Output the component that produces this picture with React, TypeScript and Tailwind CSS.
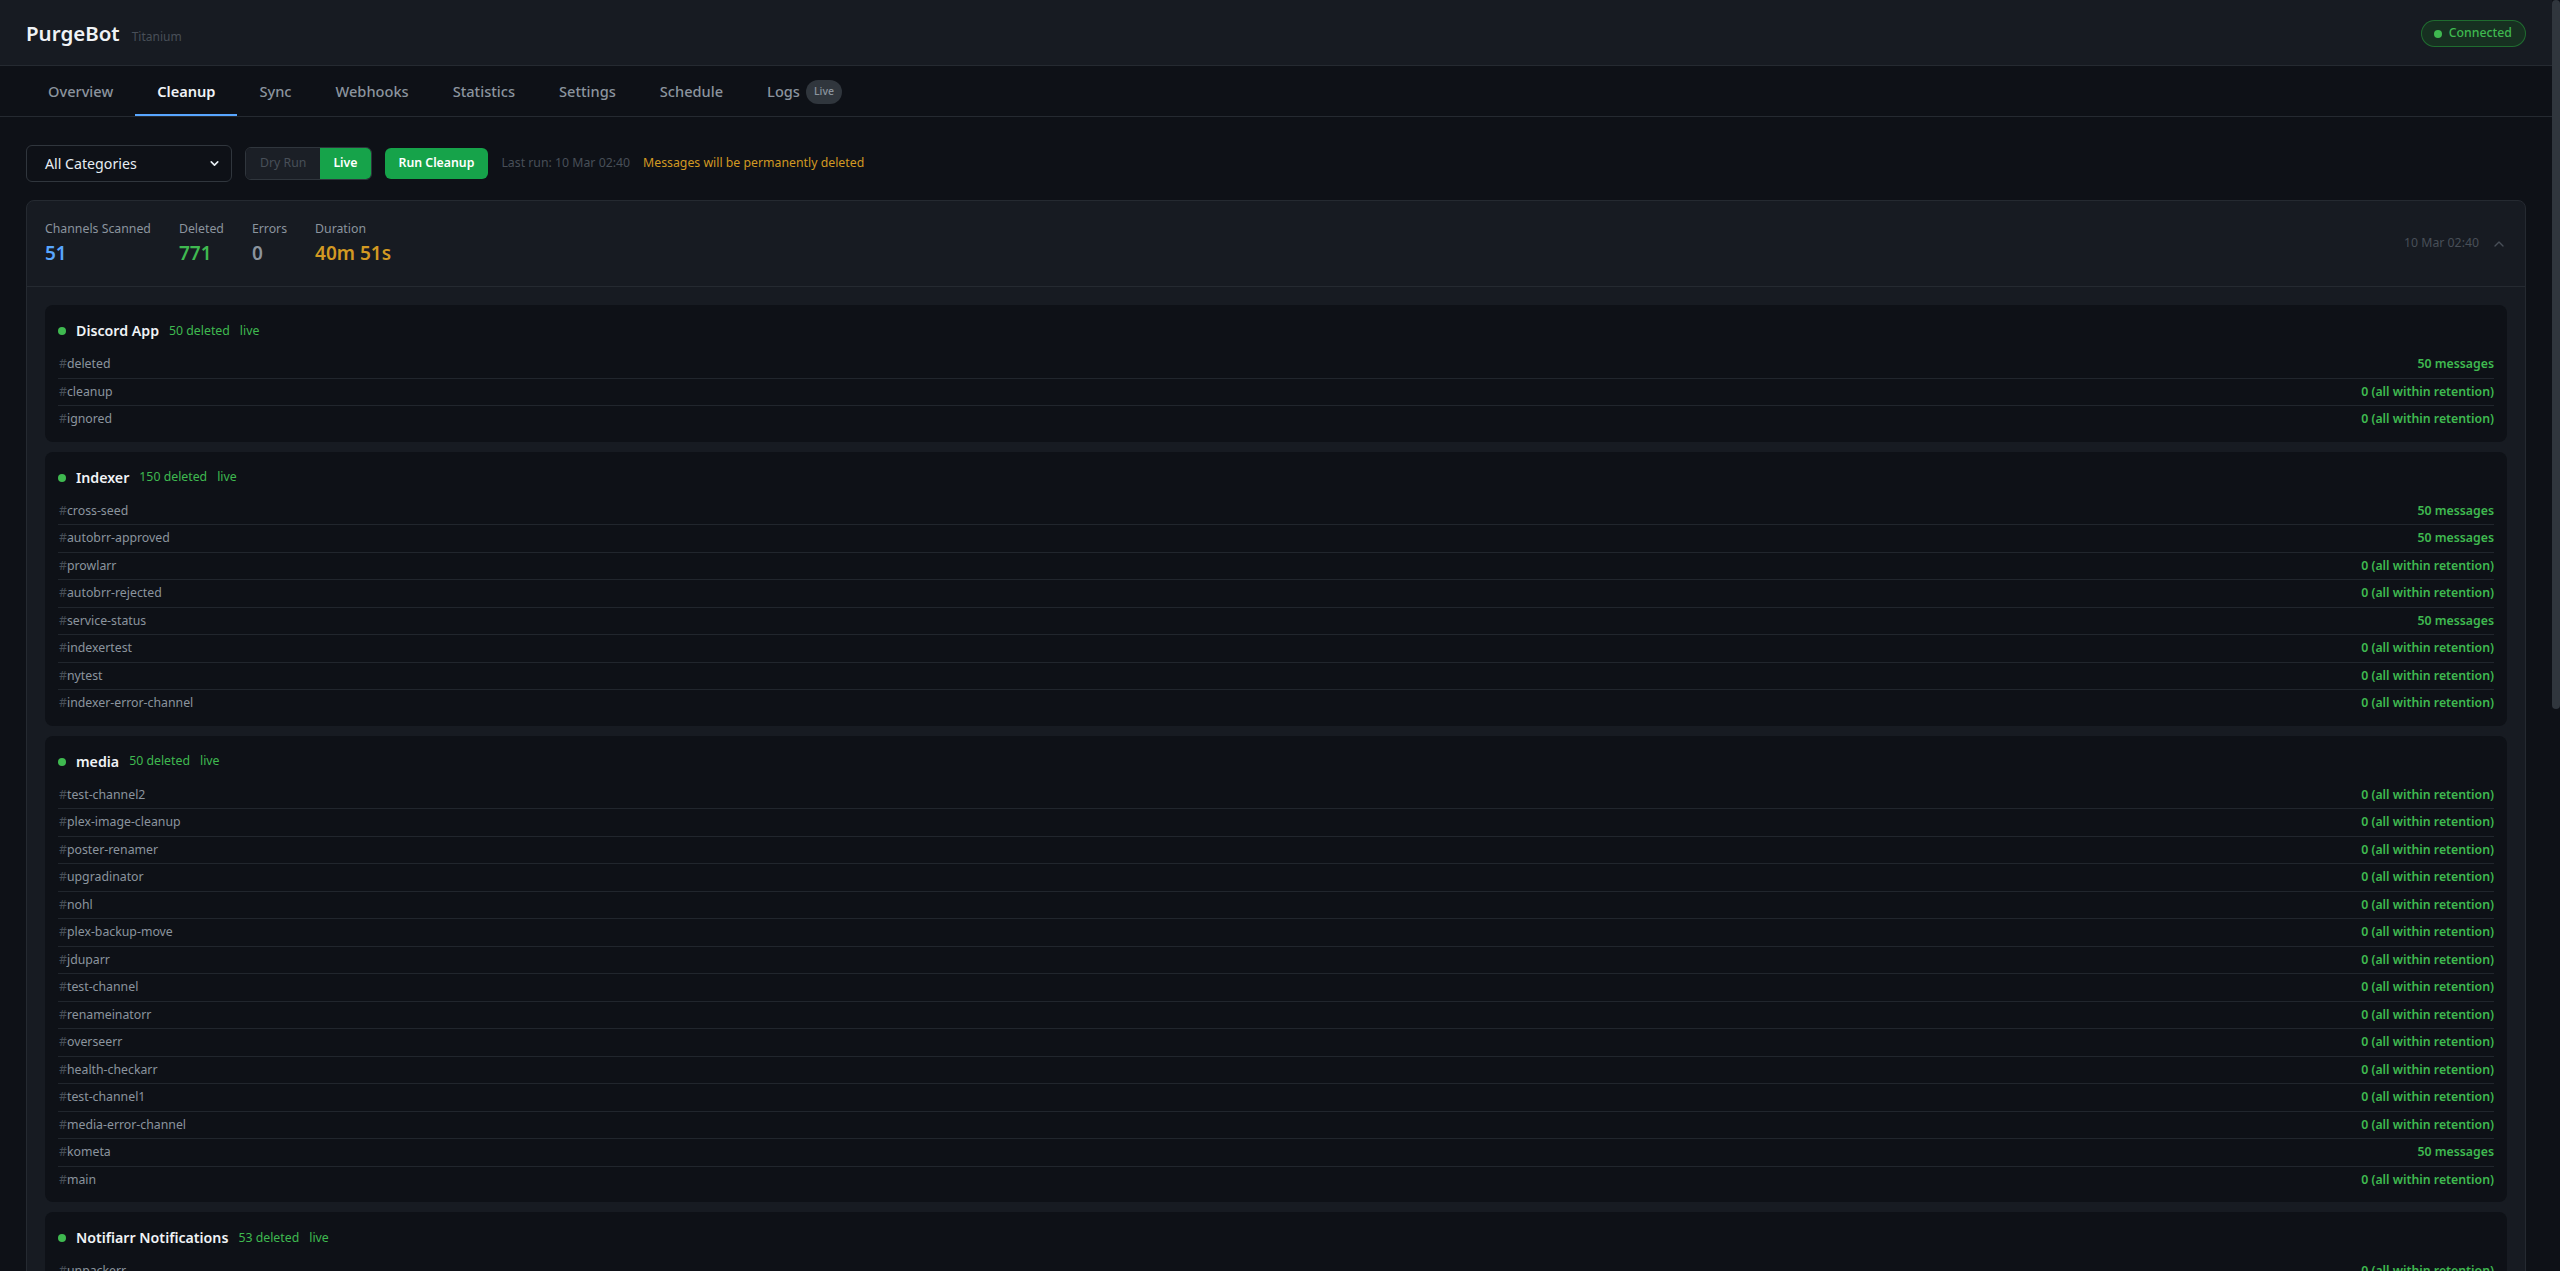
import { ChevronDown, ChevronUp } from "lucide-react";

type Category = {
  name: string;
  deleted: number;
  channels: [string, string][];
};

const KEPT = "0 (all within retention)";
const FIFTY = "50 messages";

const categories: Category[] = [
  {
    name: "Discord App",
    deleted: 50,
    channels: [
      ["deleted", FIFTY],
      ["cleanup", KEPT],
      ["ignored", KEPT],
    ],
  },
  {
    name: "Indexer",
    deleted: 150,
    channels: [
      ["cross-seed", FIFTY],
      ["autobrr-approved", FIFTY],
      ["prowlarr", KEPT],
      ["autobrr-rejected", KEPT],
      ["service-status", FIFTY],
      ["indexertest", KEPT],
      ["nytest", KEPT],
      ["indexer-error-channel", KEPT],
    ],
  },
  {
    name: "media",
    deleted: 50,
    channels: [
      ["test-channel2", KEPT],
      ["plex-image-cleanup", KEPT],
      ["poster-renamer", KEPT],
      ["upgradinator", KEPT],
      ["nohl", KEPT],
      ["plex-backup-move", KEPT],
      ["jduparr", KEPT],
      ["test-channel", KEPT],
      ["renameinatorr", KEPT],
      ["overseerr", KEPT],
      ["health-checkarr", KEPT],
      ["test-channel1", KEPT],
      ["media-error-channel", KEPT],
      ["kometa", FIFTY],
      ["main", KEPT],
    ],
  },
  {
    name: "Notifiarr Notifications",
    deleted: 53,
    channels: [["unpackerr", KEPT]],
  },
];

const tabs = ["Overview", "Cleanup", "Sync", "Webhooks", "Statistics", "Settings", "Schedule", "Logs"];

const stats = [
  { label: "Channels Scanned", value: "51", color: "text-[#58a6ff]" },
  { label: "Deleted", value: "771", color: "text-[#3fb950]" },
  { label: "Errors", value: "0", color: "text-[#8b949e]" },
  { label: "Duration", value: "40m 51s", color: "text-[#d29922]" },
];

function CategoryCard({ cat }: { cat: Category }) {
  return (
    <div className="rounded-lg bg-[#0e1117] px-[13px] pt-[14px] pb-[9px]">
      <div className="mb-[8px] flex h-6 items-center gap-2.5">
        <span className="h-2 w-2 rounded-full bg-[#3fb950]" />
        <span className="text-[14.2px] font-semibold text-[#f0f3f6]">{cat.name}</span>
        <span className="text-[12.3px] text-[#3fb950]">{cat.deleted} deleted</span>
        <span className="text-[12.3px] text-[#3fb950]">live</span>
      </div>
      <div>
        {cat.channels.map(([name, result]) => (
          <div
            key={name}
            className="flex items-center justify-between border-b border-[#21262d] py-[6px] text-[12.3px] leading-[14.5px] last:border-b-0"
          >
            <span className="pl-px text-[#8b949e]">
              <span className="text-[#484f58]">#</span>
              {name}
            </span>
            <span className="font-semibold text-[#3fb950]">{result}</span>
          </div>
        ))}
      </div>
    </div>
  );
}

export default function App() {
  return (
    <div className="flex h-[1271px] overflow-hidden bg-[#0e1117] font-['Noto_Sans',sans-serif] text-[#e6edf3]">
      <div className="min-w-0 flex-1">
        <header className="flex h-[66px] items-center justify-between border-b border-[#252a31] bg-[#171b22] px-[26px] pt-[2px]">
          <div className="flex items-baseline gap-3">
            <h1 className="text-[20.5px] font-semibold text-[#f0f3f6]">PurgeBot</h1>
            <span className="text-[12px] text-[#484f58]">Titanium</span>
          </div>
          <div className="flex h-[27px] items-center gap-[7px] rounded-full border border-[#238636]/70 bg-[#173021] pl-3 pr-[13px] text-[12.3px] font-medium text-[#3fb950]">
            <span className="h-2 w-2 rounded-full bg-[#3fb950]" />
            Connected
          </div>
        </header>

        <nav className="flex h-[51px] border-b border-[#252a31] px-[26px]">
          {tabs.map((tab) => {
            const active = tab === "Cleanup";
            return (
              <div
                key={tab}
                className={
                  active
                    ? "flex items-center gap-1.5 border-b-2 border-[#58a6ff] px-[22px] pt-[4px] text-[14.6px] font-semibold text-[#f0f3f6]"
                    : "flex items-center gap-1.5 border-b-2 border-transparent px-[22px] pt-[4px] text-[14.6px] font-medium text-[#8b949e]"
                }
              >
                {tab}
                {tab === "Logs" && (
                  <span className="flex h-[24px] items-center rounded-full bg-[#30363d] px-[8px] text-[10.5px] text-[#8b949e]">
                    Live
                  </span>
                )}
              </div>
            );
          })}
        </nav>

        <main className="px-[26px] pt-[28px]">
          <div className="flex items-center gap-[13px] text-[12.3px]">
            <div className="flex h-[37px] w-[206px] items-center justify-between rounded-md border border-[#30363d] bg-[#0e1117] pl-[18px] pr-[10px] text-[14.2px] text-[#e6edf3]">
              All Categories
              <ChevronDown size={13} strokeWidth={3} className="text-[#e6edf3]" />
            </div>
            <div className="flex h-[33px] overflow-hidden rounded-md border border-[#30363d]">
              <span className="flex items-center bg-[#1b1f26] px-[14px] text-[#484f58]">Dry Run</span>
              <span className="flex items-center bg-[#16a34a] px-[13px] font-semibold text-white">Live</span>
            </div>
            <button className="h-[31px] rounded-md bg-[#16a34a] px-[14px] font-semibold text-white">
              Run Cleanup
            </button>
            <span className="text-[#484f58]">Last run: 10 Mar 02:40</span>
            <span className="text-[#d29922]">Messages will be permanently deleted</span>
          </div>

          <section className="mt-[18px] rounded-lg border border-[#252a31] bg-[#171b22]">
            <div className="flex h-[86px] items-center justify-between border-b border-[#252a31] px-[18px]">
              <div className="flex gap-7">
                {stats.map((s) => (
                  <div key={s.label}>
                    <div className="text-[12.3px] leading-[18px] text-[#8b949e]">{s.label}</div>
                    <div className={`mt-px text-[19px] font-semibold leading-7 ${s.color}`}>{s.value}</div>
                  </div>
                ))}
              </div>
              <div className="flex items-center gap-3 text-[12.3px] text-[#484f58]">
                10 Mar 02:40
                <ChevronUp size={16} strokeWidth={2} />
              </div>
            </div>
            <div className="flex flex-col gap-[10px] p-[18px]">
              {categories.map((cat) => (
                <CategoryCard key={cat.name} cat={cat} />
              ))}
            </div>
          </section>
        </main>
      </div>
      <div className="w-2 shrink-0">
        <div className="h-[709px] rounded-full bg-[#30363d]" />
      </div>
    </div>
  );
}
